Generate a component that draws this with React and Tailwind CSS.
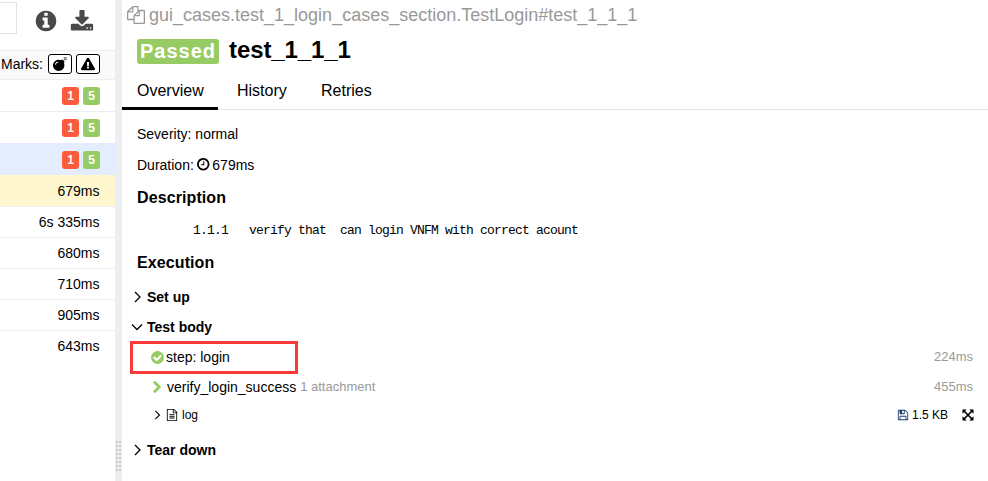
import { FaBomb, FaExclamationTriangle } from "react-icons/fa";

const paths = {
  copy: "M1696 384q40 0 68 28t28 68v1216q0 40-28 68t-68 28h-960q-40 0-68-28t-28-68v-288h-544q-40 0-68-28t-28-68v-672q0-40 20-88t48-76l408-408q28-28 76-48t88-20h416q40 0 68 28t28 68v328q68-40 128-40h416zm-544 213l-299 299h299v-299zm-640-384l-299 299h299v-299zm196 647l316-316v-416h-384v416q0 40-28 68t-68 28h-416v640h512v-256q0-40 20-88t48-76zm956 804v-1152h-384v416q0 40-28 68t-68 28h-416v640h896z",
  clock: "M1024 544v448q0 14-9 23t-23 9h-320q-14 0-23-9t-9-23v-64q0-14 9-23t23-9h224v-352q0-14 9-23t23-9h64q14 0 23 9t9 23zm416 352q0-148-73-273t-198-198-273-73-273 73-198 198-73 273 73 273 198 198 273 73 273-73 198-198 73-273zm224 0q0 209-103 385.5t-279.5 279.5-385.5 103-385.5-103-279.5-279.5-103-385.5 103-385.5 279.5-279.5 385.5-103 385.5 103 279.5 279.5 103 385.5z",
  file: "M1596 380q28 28 48 76t20 88v1152q0 40-28 68t-68 28h-1344q-40 0-68-28t-28-68v-1600q0-40 28-68t68-28h896q40 0 88 20t76 48zm-444-244v376h376q-10-29-22-41l-313-313q-12-12-41-22zm384 1528v-1024h-416q-40 0-68-28t-28-68v-416h-768v1536h1280zm-1024-864q0-14 9-23t23-9h704q14 0 23 9t9 23v64q0 14-9 23t-23 9h-704q-14 0-23-9t-9-23v-64zm736 224q14 0 23 9t9 23v64q0 14-9 23t-23 9h-704q-14 0-23-9t-9-23v-64q0-14 9-23t23-9h704zm0 256q14 0 23 9t9 23v64q0 14-9 23t-23 9h-704q-14 0-23-9t-9-23v-64q0-14 9-23t23-9h704z",
  save: "M512 1536h768v-384h-768v384zm896 0h128v-896q0-14-10-38.5t-20-34.5l-281-281q-10-10-34-20t-39-10v416q0 40-28 68t-68 28h-576q-40 0-68-28t-28-68v-416h-128v1280h128v-416q0-40 28-68t68-28h832q40 0 68 28t28 68v416zm-384-928v-320q0-13-9.5-22.5t-22.5-9.5h-192q-13 0-22.5 9.5t-9.5 22.5v320q0 13 9.5 22.5t22.5 9.5h192q13 0 22.5-9.5t9.5-22.5zm640 32v928q0 40-28 68t-68 28h-1344q-40 0-68-28t-28-68v-1344q0-40 28-68t68-28h928q40 0 88 20t76 48l280 280q28 28 48 76t20 88z",
  info: "M1152 1376v-160q0-14-9-23t-23-9h-96v-512q0-14-9-23t-23-9h-320q-14 0-23 9t-9 23v160q0 14 9 23t23 9h96v320h-96q-14 0-23 9t-9 23v160q0 14 9 23t23 9h448q14 0 23-9t9-23zm-128-896v-160q0-14-9-23t-23-9h-192q-14 0-23 9t-9 23v160q0 14 9 23t23 9h192q14 0 23-9t9-23zm640 416q0 209-103 385.5t-279.5 279.5-385.5 103-385.5-103-279.5-279.5-103-385.5 103-385.5 279.5-279.5 385.5-103 385.5 103 279.5 279.5 103 385.5z",
  download: "M1344 1344q0-26-19-45t-45-19-45 19-19 45 19 45 45 19 45-19 19-45zm256 0q0-26-19-45t-45-19-45 19-19 45 19 45 45 19 45-19 19-45zm128-224v320q0 40-28 68t-68 28h-1472q-40 0-68-28t-28-68v-320q0-40 28-68t68-28h465l135 136q58 56 136 56t136-56l136-136h464q40 0 68 28t28 68zm-325-569q17 41-14 70l-448 448q-18 19-45 19t-45-19l-448-448q-31-29-14-70 17-39 59-39h256v-448q0-26 19-45t45-19h256q26 0 45 19t19 45v448h256q42 0 59 39z",
  check: "M1412 734q0-28-18-46l-91-90q-19-19-45-19t-45 19l-408 407-226-226q-19-19-45-19t-45 19l-91 90q-18 18-18 46 0 27 18 45l362 362q19 19 45 19 27 0 46-19l543-543q18-18 18-45zm252 162q0 209-103 385.5t-279.5 279.5-385.5 103-385.5-103-279.5-279.5-103-385.5 103-385.5 279.5-279.5 385.5-103 385.5 103 279.5 279.5 103 385.5z",
};

function Icon({ name, className }) {
  return (
    <svg viewBox="0 0 1792 1792" fill="currentColor" className={`shrink-0 ${className}`}>
      <path d={paths[name]} />
    </svg>
  );
}

function Angle({ down, className = "" }) {
  return (
    <svg viewBox="0 0 12 12" fill="none" stroke="currentColor" strokeWidth="1.3" className={`shrink-0 ${className}`}>
      <path d={down ? "M1 3.5l5 5 5-5" : "M4 1l5 5-5 5"} />
    </svg>
  );
}

function Badge({ color, children }) {
  return (
    <span className={`flex h-[18px] w-[17px] items-center justify-center rounded-[3px] text-xs font-bold text-white ${color}`}>
      {children}
    </span>
  );
}

const suites = ["h-8 border-t border-[#eceff1]", "h-8 border-t border-[#eceff1]", "h-8 border-t border-[#e4ecfd] bg-[#e4edfe]"];
const durations = ["679ms", "6s 335ms", "680ms", "710ms", "905ms", "643ms"];

function Sidebar() {
  return (
    <aside className="flex w-[115px] shrink-0 flex-col overflow-hidden">
      <div className="flex h-[50px] shrink-0">
        <div className="mt-[2px] h-8 w-[17px] border border-l-0 border-[#e5e5e5]" />
        <Icon name="info" className="mt-[9px] ml-[17px] size-6 text-[#4a4a4a]" />
        <Icon name="download" className="mt-[10px] ml-[12px] size-6 text-[#4a4a4a]" />
      </div>
      <div className="flex h-[29px] shrink-0 items-center justify-end border-t border-[#eceff1] bg-[#fafafa] pr-[15px] pb-[2px]">
        <span className="mr-[5px] text-sm">Marks:</span>
        <span className="mr-1 flex h-5 w-6 items-center justify-center rounded-[3px] border border-black bg-white">
          <FaBomb className="size-[14px]" />
        </span>
        <span className="flex h-5 w-6 items-center justify-center rounded-[3px] border border-black bg-white">
          <FaExclamationTriangle className="size-[14px]" />
        </span>
      </div>
      {suites.map((style, i) => (
        <div key={i} className={`flex shrink-0 items-center justify-end gap-1 pr-[15px] ${style}`}>
          <Badge color="bg-[#fd5a3e]">1</Badge>
          <Badge color="bg-[#97cc64]">5</Badge>
        </div>
      ))}
      {durations.map((d, i) => (
        <div
          key={d}
          className={`flex h-[31px] shrink-0 items-center justify-end pr-[15.5px] text-sm ${i === 0 ? "bg-[#fff7cd]" : "border-t border-[#eceff1]"}`}
        >
          {d}
        </div>
      ))}
    </aside>
  );
}

function Splitter() {
  return (
    <div className="flex w-[7px] shrink-0 items-end justify-center bg-[#eceff1] pb-[10px]">
      <div className="grid grid-cols-2 gap-x-px gap-y-[2px]">
        {Array.from({ length: 16 }, (_, i) => (
          <span key={i} className="size-[2px] bg-[#c8cacc]" />
        ))}
      </div>
    </div>
  );
}

export default function App() {
  return (
    <div className="flex h-[481px] w-[988px] overflow-hidden bg-white font-['Liberation_Sans',Arial,sans-serif] text-black">
      <Sidebar />
      <Splitter />
      <main className="flex min-w-0 flex-1 flex-col">
        <div className="flex h-[30px] shrink-0 items-center pl-[5px] text-lg text-[#999]">
          <Icon name="copy" className="mr-[4px] size-[18px]" />
          <span>gui_cases.test_1_login_cases_section.TestLogin#test_1_1_1</span>
        </div>
        <div className="flex h-[41px] shrink-0 items-center pl-[15px]">
          <span className="mt-px flex h-[25px] w-[82px] items-center justify-center rounded-[3px] bg-[#97cc64] text-xl font-bold tracking-[1px] text-white">
            Passed
          </span>
          <h2 className="ml-[10px] -mt-[2px] text-2xl font-bold tracking-[-0.1px]">test_1_1_1</h2>
        </div>
        <nav className="flex h-[39px] shrink-0 border-b border-[#e5e5e5] text-base">
          <div className="flex h-[39px] w-24 items-center border-b-3 border-black pl-[15px] pt-[3px]">Overview</div>
          <div className="flex h-9 w-[84px] items-center pl-[19px] pt-[3px]">History</div>
          <div className="flex h-9 items-center pl-[19px] pt-[3px]">Retries</div>
        </nav>
        <div className="mt-2 flex h-[31px] shrink-0 items-center pl-[15px] text-sm">Severity: normal</div>
        <div className="flex h-[31px] shrink-0 items-center pl-[15px] text-sm">
          Duration: <Icon name="clock" className="mr-[2px] ml-[2px] size-[14.5px]" /> 679ms
        </div>
        <h3 className="mt-[2px] flex h-8 shrink-0 items-center pl-[15px] text-base font-bold tracking-[0.1px]">Description</h3>
        <pre className="flex h-[34px] shrink-0 items-center pl-[71px] font-['Liberation_Mono',monospace] text-[13px] tracking-[-0.8px]">
          {"1.1.1   verify that  can login VNFM with correct acount"}
        </pre>
        <h3 className="flex h-[30px] shrink-0 items-center pl-[15px] text-base font-bold tracking-[0.1px]">Execution</h3>
        <div className="mt-1 flex h-[30px] shrink-0 items-center gap-1 pl-[9px] text-sm font-bold">
          <Angle className="size-3" />Set up
        </div>
        <div className="flex h-[30px] shrink-0 items-center gap-1 pl-[9px] text-sm font-bold">
          <Angle down className="size-3" />Test body
        </div>
        <div className="flex h-[30px] shrink-0 items-center pl-2 pr-[15px] text-sm">
          <div className="flex h-[33px] w-[168px] shrink-0 items-center border-3 border-[#fa3838] pl-[17px]">
            <Icon name="check" className="mr-px size-[15px] text-[#97cc64]" />
            step: login
          </div>
          <span className="ml-auto text-[13px] text-[#999]">224ms</span>
        </div>
        <div className="flex h-[29px] shrink-0 items-center pl-[29px] pr-[15px] text-sm">
          <svg viewBox="0 0 12 12" fill="none" stroke="#97cc64" strokeWidth="2.8" className="mr-[4px] size-3">
            <path d="M3 .7l5.3 5.3L3 11.3" />
          </svg>
          verify_login_success
          <span className="mt-px ml-1 text-[13px] text-[#999]">1 attachment</span>
          <span className="mt-px ml-auto text-[13px] text-[#999]">455ms</span>
        </div>
        <div className="flex h-[27px] shrink-0 items-center pl-[30px] pr-[14px] text-xs">
          <Angle className="mr-1 size-[10px]" />
          <Icon name="file" className="mr-[4px] size-3" />
          log
          <Icon name="save" className="mr-[3px] ml-auto size-3 text-[#1c3d6b]" />
          1.5 KB
          <svg viewBox="0 0 12 12" className="ml-[14px] size-3" fill="black">
            <path d="M0.5 .5h4.2L.5 4.7zM11.5 .5v4.2L7.3 .5zM.5 11.5V7.3l4.2 4.2zM11.5 11.5H7.3l4.2-4.2z" />
            <path d="M2 2l8 8M10 2l-8 8" stroke="black" strokeWidth="1.7" />
          </svg>
        </div>
        <div className="mt-[7px] flex h-[30px] shrink-0 items-center gap-1 pl-[9px] text-sm font-bold">
          <Angle className="size-3" />Tear down
        </div>
      </main>
    </div>
  );
}
